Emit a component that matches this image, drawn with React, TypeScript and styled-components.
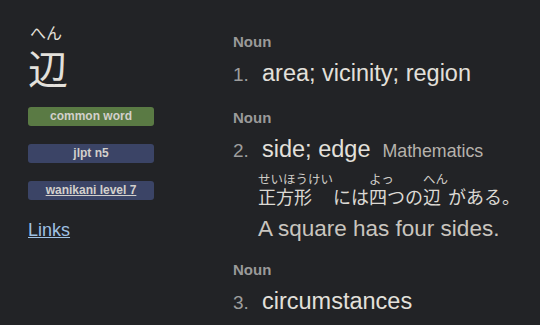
import styled, { createGlobalStyle } from "styled-components";

const GlobalStyle = createGlobalStyle`
  html, body {
    margin: 0;
    padding: 0;
    background: #222326;
  }
  body {
    width: 540px;
    height: 325px;
    overflow: hidden;
    font-family: "Liberation Sans", "Noto Sans CJK JP", sans-serif;
    color: #e3e0db;
  }
`;

const Page = styled.div`
  display: flex;
  gap: 79px;
  padding: 20px 0 0 28px;
`;

const WordColumn = styled.aside`
  width: 126px;
  display: flex;
  flex-direction: column;
`;

const Reading = styled.div`
  font-family: "Noto Sans CJK JP", sans-serif;
  font-size: 16px;
  line-height: 20px;
  padding-left: 2px;
  margin-top: 2px;
`;

const Kanji = styled.div`
  font-family: "Noto Sans CJK JP", sans-serif;
  font-size: 40px;
  line-height: 44px;
  margin: 3px 0 18px;
`;

const Tags = styled.div`
  display: flex;
  flex-direction: column;
  gap: 18px;
`;

const Tag = styled.span<{ $tone: "green" | "blue"; $link?: boolean }>`
  display: block;
  height: 19px;
  line-height: 19px;
  border-radius: 3px;
  text-align: center;
  font-size: 12px;
  font-weight: 700;
  color: #d3d0cb;
  background: ${(p) => (p.$tone === "green" ? "#5a7a44" : "#3b4466")};
  text-decoration: ${(p) => (p.$link ? "underline" : "none")};
`;

const LinksLink = styled.a`
  margin-top: 19px;
  font-size: 18px;
  line-height: 22px;
  color: #9fc1e3;
  text-decoration: underline;
`;

const Senses = styled.main`
  display: flex;
  flex-direction: column;
  padding-top: 13px;
`;

const Sense = styled.section`
  margin-bottom: 19px;
`;

const PartOfSpeech = styled.div`
  font-size: 15px;
  line-height: 18px;
  font-weight: 700;
  color: #9a9a9a;
  margin-bottom: 7px;
`;

const Meaning = styled.div`
  display: flex;
  align-items: baseline;
  line-height: 30px;
`;

const Divider = styled.span`
  width: 29px;
  font-size: 19px;
  color: #9d9d9d;
`;

const Definition = styled.span`
  font-size: 23.5px;
`;

const Tagline = styled.span`
  font-size: 17.8px;
  color: #b6b2ac;
  margin-left: 12px;
`;

const Example = styled.div`
  padding-left: 25px;
  margin-top: 6px;
`;

const Sentence = styled.div`
  display: flex;
  align-items: flex-end;
  font-family: "Noto Sans CJK JP", sans-serif;
  font-size: 18px;
  line-height: 20px;
  color: #dcd9d4;
`;

const Word = styled.span`
  display: inline-flex;
  flex-direction: column;
  align-items: flex-start;
`;

const Furigana = styled.span<{ $overhang?: boolean }>`
  font-size: 12.5px;
  line-height: 14px;
  color: #cfccc7;
  white-space: nowrap;
  width: ${(p) => (p.$overhang ? "0" : "auto")};
  overflow: visible;
`;

const Translation = styled.div`
  font-size: 22.5px;
  line-height: 26px;
  color: #c9c5bf;
  margin-top: 10px;
`;

type Part = { text: string; furi?: string; overhang?: boolean };

const sentence: Part[] = [
  { text: "正方形", furi: "せいほうけい" },
  { text: "には" },
  { text: "四", furi: "よっ", overhang: true },
  { text: "つの" },
  { text: "辺", furi: "へん" },
  { text: "がある。" },
];

export default function App() {
  return (
    <>
      <GlobalStyle />
      <Page>
        <WordColumn>
          <Reading>へん</Reading>
          <Kanji>辺</Kanji>
          <Tags>
            <Tag $tone="green">common word</Tag>
            <Tag $tone="blue">jlpt n5</Tag>
            <Tag $tone="blue" $link>
              wanikani level 7
            </Tag>
          </Tags>
          <LinksLink href="#">Links</LinksLink>
        </WordColumn>
        <Senses>
          <Sense>
            <PartOfSpeech>Noun</PartOfSpeech>
            <Meaning>
              <Divider>1.</Divider>
              <Definition>area; vicinity; region</Definition>
            </Meaning>
          </Sense>
          <Sense>
            <PartOfSpeech>Noun</PartOfSpeech>
            <Meaning>
              <Divider>2.</Divider>
              <Definition>side; edge</Definition>
              <Tagline>Mathematics</Tagline>
            </Meaning>
            <Example>
              <Sentence>
                {sentence.map((part, i) => (
                  <Word key={i}>
                    {part.furi && <Furigana $overhang={part.overhang}>{part.furi}</Furigana>}
                    <span>{part.text}</span>
                  </Word>
                ))}
              </Sentence>
              <Translation>A square has four sides.</Translation>
            </Example>
          </Sense>
          <Sense>
            <PartOfSpeech>Noun</PartOfSpeech>
            <Meaning>
              <Divider>3.</Divider>
              <Definition>circumstances</Definition>
            </Meaning>
          </Sense>
        </Senses>
      </Page>
    </>
  );
}
